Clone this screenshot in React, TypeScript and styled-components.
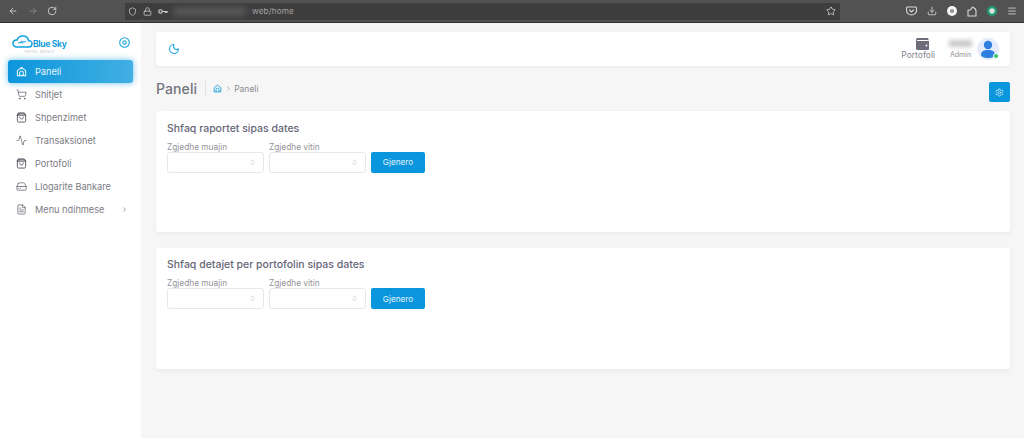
import React from 'react';
import styled, { createGlobalStyle } from 'styled-components';
import {
  ArrowLeft,
  ArrowRight,
  RotateCw,
  Shield,
  Lock,
  Star,
  Download,
  Menu as MenuIcon,
  ShoppingCart,
  Activity,
  HardDrive,
  FileText,
  ChevronRight,
  Moon,
  Settings,
  ChevronsUpDown,
} from 'lucide-react';

const GlobalStyle = createGlobalStyle`
  html, body { margin: 0; padding: 0; height: 100%; }
  body { background: #f6f6f6; font-family: Inter, "Liberation Sans", sans-serif; overflow: hidden; }
  * { box-sizing: border-box; }
`;

const Page = styled.div`
  width: 1024px;
  height: 438px;
  display: flex;
  flex-direction: column;
`;

const Chrome = styled.div`
  height: 23px;
  flex: none;
  background: #525252;
  display: flex;
  align-items: center;
  border-bottom: 1px solid #2f2f2f;
  color: #d8d8d8;
`;

const NavButtons = styled.div`
  width: 125px;
  padding-left: 8px;
  display: flex;
  align-items: center;
  gap: 9.5px;
`;

const UrlBar = styled.div`
  width: 715px;
  height: 17px;
  background: #3e3e3e;
  display: flex;
  align-items: center;
  padding: 0 4px 0 3px;
  gap: 6px;
  color: #cfcfcf;
`;

const BlurredUrl = styled.div`
  width: 72px;
  height: 7px;
  background: #5d5d5d;
  filter: blur(3px);
`;

const UrlText = styled.span`
  font-size: 8.2px;
  color: #a2a2a2;
  letter-spacing: 0.1px;
  flex: 1;
`;

const Tools = styled.div`
  flex: 1;
  display: flex;
  align-items: center;
  justify-content: flex-end;
  gap: 10px;
  padding-right: 7px;
`;

const WhiteDot = styled.span`
  width: 10px;
  height: 10px;
  border-radius: 50%;
  background: radial-gradient(circle, #9a9a9a 0 25%, #f4f4f4 35%);
`;

const GreenDot = styled.span`
  width: 10px;
  height: 10px;
  border-radius: 50%;
  background: radial-gradient(circle, #e0e0e0 0 30%, #1f9d72 45%);
`;

const Body = styled.div`
  flex: 1;
  display: flex;
  min-height: 0;
`;

const Sidebar = styled.aside`
  width: 141px;
  flex: none;
  background: #fff;
  padding: 12px 8px 0;
`;

const LogoRow = styled.div`
  height: 25px;
  display: flex;
  align-items: flex-start;
  justify-content: space-between;
  padding: 0 3px 0 4px;
`;

const Logo = styled.div`
  display: flex;
  flex-direction: column;
`;

const LogoMark = styled.div`
  display: flex;
  align-items: flex-start;
  height: 13px;
`;

const LogoName = styled.span`
  font-size: 8.5px;
  line-height: 10px;
  margin-top: 4px;
  font-weight: 700;
  letter-spacing: -0.3px;
  color: #139cdb;
`;

const LogoSub = styled.span`
  font-size: 3px;
  line-height: 4px;
  margin-top: 2px;
  letter-spacing: 0.5px;
  color: #b5b5b5;
  padding-left: 12px;
`;

const TargetIcon = styled.svg`
  margin-top: 2px;
`;

const NavList = styled.nav`
  display: flex;
  flex-direction: column;
`;

const NavItem = styled.div<{ $active?: boolean }>`
  height: 23px;
  display: flex;
  align-items: center;
  padding: 0 5px 0 8px;
  gap: 8px;
  border-radius: 3px;
  font-size: 9.2px;
  color: ${(p) => (p.$active ? '#e4f4fc' : '#7c7c84')};
  background: ${(p) => (p.$active ? 'linear-gradient(90deg, #0d96dc, #41afe3)' : 'transparent')};
  box-shadow: ${(p) => (p.$active ? '0 0 6px rgba(30, 160, 225, 0.65)' : 'none')};
  svg {
    color: ${(p) => (p.$active ? '#e4f4fc' : '#55555f')};
    flex: none;
  }
`;

const NavLabel = styled.span`
  flex: 1;
`;

const Main = styled.main`
  flex: 1;
  padding: 9px 14px 0 15px;
  display: flex;
  flex-direction: column;
`;

const TopBar = styled.div`
  height: 34px;
  flex: none;
  background: #fff;
  border-radius: 3px;
  box-shadow: 0 1px 4px rgba(0, 0, 0, 0.06);
  display: flex;
  align-items: center;
  padding: 0 11px 0 12px;
  color: #1fa3e0;
`;

const Spacer = styled.div`
  flex: 1;
`;

const WalletBlock = styled.div`
  display: flex;
  flex-direction: column;
  align-items: flex-end;
  margin-right: 14px;
  color: #85858f;
  font-size: 8.5px;
  line-height: 9px;
  gap: 1px;
`;

const WalletIcon = styled.svg`
  margin-right: 6px;
`;

const UserBlock = styled.div`
  display: flex;
  flex-direction: column;
  align-items: center;
  margin-right: 5px;
  gap: 3px;
`;

const BlurredName = styled.div`
  width: 23px;
  height: 7px;
  background: #c9c9c9;
  filter: blur(2px);
`;

const Role = styled.span`
  font-size: 7px;
  color: #8d8d92;
`;

const Avatar = styled.div`
  position: relative;
  width: 22px;
  height: 22px;
  border-radius: 50%;
  background: #e4ebfa;
  display: flex;
  align-items: center;
  justify-content: center;
`;

const OnlineBadge = styled.span`
  position: absolute;
  right: 0;
  bottom: 1px;
  width: 6px;
  height: 6px;
  border-radius: 50%;
  background: #2ec46d;
  border: 1px solid #fff;
`;

const PageHead = styled.div`
  height: 45px;
  flex: none;
  display: flex;
  align-items: center;
`;

const PageTitle = styled.h1`
  margin: 0;
  font-size: 14px;
  font-weight: 500;
  color: #74747e;
  padding-right: 8px;
  border-right: 1px solid #e4e4e4;
  line-height: 15px;
  letter-spacing: 0.1px;
`;

const Crumbs = styled.div`
  margin-left: 7px;
  display: flex;
  align-items: center;
  gap: 2.5px;
  font-size: 8.5px;
  color: #8a8a92;
  svg:first-child {
    color: #1fa3e0;
  }
`;

const SquareButton = styled.button`
  width: 21px;
  height: 20px;
  margin-top: 7px;
  border: none;
  border-radius: 2px;
  background: #0a96dc;
  color: #d5effb;
  padding: 0;
  display: flex;
  align-items: center;
  justify-content: center;
`;

const Cards = styled.div`
  display: flex;
  flex-direction: column;
  gap: 15.5px;
`;

const Card = styled.section`
  height: 121px;
  background: #fff;
  border-radius: 3px;
  box-shadow: 0 2px 5px rgba(0, 0, 0, 0.05);
  padding: 10.5px 11px;
`;

const CardTitle = styled.h2`
  margin: 0 0 7px;
  font-size: 10.5px;
  line-height: 13px;
  font-weight: 500;
  color: #666678;
`;

const FormRow = styled.div`
  display: flex;
  align-items: flex-end;
  gap: 5px;
`;

const Field = styled.div`
  width: 97px;
  display: flex;
  flex-direction: column;
`;

const FieldLabel = styled.label`
  font-size: 8.3px;
  line-height: 10px;
  color: #93939a;
`;

const SelectBox = styled.div`
  height: 21px;
  border: 1px solid #e8e8e8;
  border-radius: 3px;
  background: #fff;
  display: flex;
  align-items: center;
  justify-content: flex-end;
  padding-right: 7px;
  color: #b4b4b4;
`;

const GenerateButton = styled.button`
  width: 54px;
  height: 21px;
  border: none;
  border-radius: 2px;
  background: #0a96dc;
  color: #e2f4fd;
  font-family: inherit;
  font-size: 8.2px;
  padding: 0;
`;

type IconProps = { size?: number; strokeWidth?: number };

function HomeArch({ size = 11, strokeWidth = 1.5 }: IconProps) {
  return (
    <svg width={size} height={size} viewBox="0 0 24 24" fill="none" stroke="currentColor" strokeWidth={strokeWidth * 1.6} strokeLinejoin="round">
      <path d="M3 10 L12 3 L21 10 V21 H3 Z" />
      <path d="M8 21 V15 A4 4 0 0 1 16 15 V21" />
    </svg>
  );
}

function BagBox({ size = 11, strokeWidth = 1.5 }: IconProps) {
  return (
    <svg width={size} height={size} viewBox="0 0 24 24" fill="none" stroke="currentColor" strokeWidth={strokeWidth * 1.35} strokeLinecap="round" strokeLinejoin="round">
      <rect x="3" y="4" width="18" height="18" rx="3" />
      <path d="M6 2 H18 L21 7 H3 Z" />
      <path d="M8 11 C8 17 16 17 16 11" />
    </svg>
  );
}

function KeyMark() {
  return (
    <svg width="10" height="9" viewBox="0 0 20 18" fill="none" stroke="currentColor" strokeWidth="2.4">
      <circle cx="5" cy="9" r="3.5" />
      <path d="M8.5 9 H19 M15 9 V12 M18 9 V12" />
    </svg>
  );
}

function PocketMark() {
  return (
    <svg width="11" height="10" viewBox="0 0 22 20" fill="none" stroke="currentColor" strokeWidth="2.2" strokeLinecap="round" strokeLinejoin="round">
      <path d="M3 2 H19 A2 2 0 0 1 21 4 V9 A10 9 0 0 1 1 9 V4 A2 2 0 0 1 3 2 Z" />
      <path d="M7 8 L11 12 L15 8" />
    </svg>
  );
}

function PuzzleHouse() {
  return (
    <svg width="10" height="11" viewBox="0 0 20 22" fill="none" stroke="currentColor" strokeWidth="2.2" strokeLinejoin="round">
      <path d="M2 8 H7 L11 2 L17 6 V8 H18 V20 H2 Z" />
    </svg>
  );
}

const navItems = [
  { label: 'Paneli', icon: HomeArch, active: true },
  { label: 'Shitjet', icon: ShoppingCart },
  { label: 'Shpenzimet', icon: BagBox },
  { label: 'Transaksionet', icon: Activity },
  { label: 'Portofoli', icon: BagBox },
  { label: 'Llogarite Bankare', icon: HardDrive },
  { label: 'Menu ndihmese', icon: FileText, more: true },
];

const reportCards = ['Shfaq raportet sipas dates', 'Shfaq detajet per portofolin sipas dates'];

function ReportCard({ title }: { title: string }) {
  return (
    <Card>
      <CardTitle>{title}</CardTitle>
      <FormRow>
        <Field>
          <FieldLabel>Zgjedhe muajin</FieldLabel>
          <SelectBox>
            <ChevronsUpDown size={7} />
          </SelectBox>
        </Field>
        <Field>
          <FieldLabel>Zgjedhe vitin</FieldLabel>
          <SelectBox>
            <ChevronsUpDown size={7} />
          </SelectBox>
        </Field>
        <GenerateButton>Gjenero</GenerateButton>
      </FormRow>
    </Card>
  );
}

export default function App() {
  return (
    <Page>
      <GlobalStyle />
      <Chrome>
        <NavButtons>
          <ArrowLeft size={10} />
          <ArrowRight size={10} color="#8b8b8b" />
          <RotateCw size={10} />
        </NavButtons>
        <UrlBar>
          <Shield size={9} />
          <Lock size={9} />
          <KeyMark />
          <BlurredUrl />
          <UrlText>web/home</UrlText>
          <Star size={10} />
        </UrlBar>
        <Tools>
          <PocketMark />
          <Download size={10} />
          <WhiteDot />
          <PuzzleHouse />
          <GreenDot />
          <MenuIcon size={10} />
        </Tools>
      </Chrome>
      <Body>
        <Sidebar>
          <LogoRow>
            <Logo>
              <LogoMark>
                <svg width="21" height="13" viewBox="0 0 21 13" fill="none" stroke="#12a0e0" strokeWidth="1.5">
                  <path d="M5 12 C2 12 1 10 1 8 C1 6 3 4.5 5 5 C6 2 8.5 1 11 1 C14 1 16 3 16.5 5.5 C18.5 5.5 20 7 20 8.5 C20 10.5 18.5 12 16.5 12 Z" />
                  <path d="M6 8 L14 6.5 M9 6 L11 8.5" strokeWidth="1.2" />
                </svg>
                <LogoName>Blue Sky</LogoName>
              </LogoMark>
              <LogoSub>TRAVEL AGENCY</LogoSub>
            </Logo>
            <TargetIcon width="11" height="11" viewBox="0 0 11 11" fill="none" stroke="#1fa3e0" strokeWidth="1.1">
              <circle cx="5.5" cy="5.5" r="4.8" />
              <circle cx="5.5" cy="5.5" r="1.7" />
            </TargetIcon>
          </LogoRow>
          <NavList>
            {navItems.map((item) => {
              const Icon = item.icon;
              return (
                <NavItem key={item.label} $active={item.active}>
                  <Icon size={11} strokeWidth={1.5} />
                  <NavLabel>{item.label}</NavLabel>
                  {item.more && <ChevronRight size={7} />}
                </NavItem>
              );
            })}
          </NavList>
        </Sidebar>
        <Main>
          <TopBar>
            <Moon size={12} strokeWidth={2.2} />
            <Spacer />
            <WalletBlock>
              <WalletIcon width="13" height="12" viewBox="0 0 13 12">
                <path fill="#6d6d7a" d="M1.5 0 H11.5 A1 1 0 0 1 12.5 1 V2 H1 V3 H13 V11 A1 1 0 0 1 12 12 H1.5 A1.5 1.5 0 0 1 0 10.5 V1.5 A1.5 1.5 0 0 1 1.5 0 Z" />
                <circle cx="10.5" cy="7.5" r="0.9" fill="#fff" />
              </WalletIcon>
              Portofoli
            </WalletBlock>
            <UserBlock>
              <BlurredName />
              <Role>Admin</Role>
            </UserBlock>
            <Avatar>
              <svg width="16" height="18" viewBox="0 0 16 18" fill="#2d7fe0">
                <circle cx="8" cy="5" r="4.2" />
                <path d="M1 15 C1 11 4 10 8 10 C12 10 15 11 15 15 C15 16.5 12 18 8 18 C4 18 1 16.5 1 15 Z" />
              </svg>
              <OnlineBadge />
            </Avatar>
          </TopBar>
          <PageHead>
            <PageTitle>Paneli</PageTitle>
            <Crumbs>
              <HomeArch size={9} />
              <ChevronRight size={7} />
              <span>Paneli</span>
            </Crumbs>
            <Spacer />
            <SquareButton>
              <Settings size={9} />
            </SquareButton>
          </PageHead>
          <Cards>
            {reportCards.map((title) => (
              <ReportCard key={title} title={title} />
            ))}
          </Cards>
        </Main>
      </Body>
    </Page>
  );
}
